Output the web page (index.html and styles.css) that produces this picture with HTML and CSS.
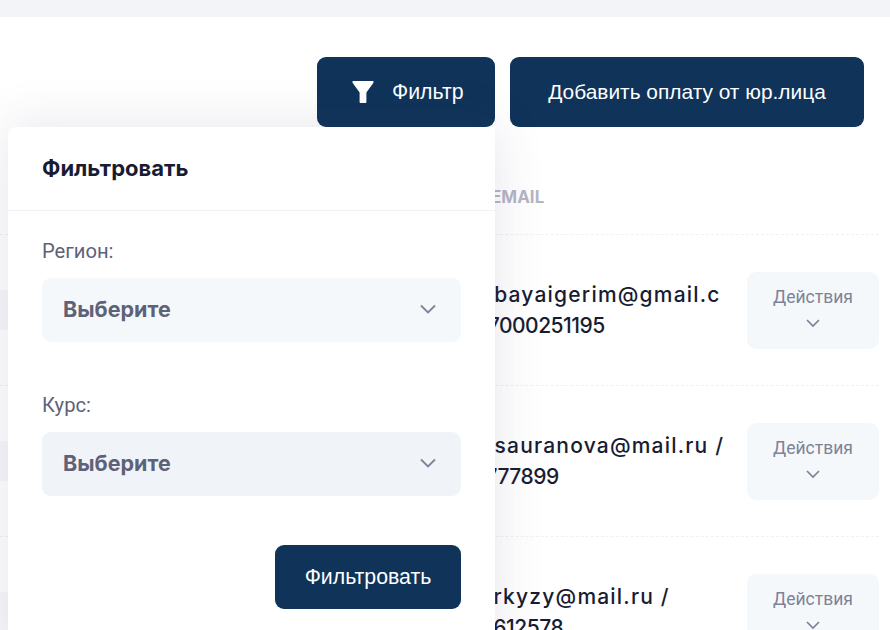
FILE: index.html
```html
<!DOCTYPE html>
<html lang="ru">
<head>
<meta charset="utf-8">
<title>Оплаты</title>
<link rel="stylesheet" href="styles.css">
</head>
<body>
<div class="topbar"></div>
<main class="card">
  <div class="toolbar">
    <div class="filter-wrap">
      <button class="btn btn-filter">
        <svg class="funnel" viewBox="0 0 22 24" width="22" height="24"><path d="M.6 1h20.8l.1 1.8-7.1 9.6v10.2l-.6.5H8.2l-.6-.5V12.4L.5 2.8z" fill="#fff"/></svg>
        <span>Фильтр</span>
      </button>
      <section class="popover">
        <h2 class="pop-title">Фильтровать</h2>
        <div class="pop-body">
          <label class="field-label">Регион:</label>
          <div class="select">
            <span>Выберите</span>
            <svg viewBox="0 0 18 12" width="18" height="12"><path d="M2 2.5l7 7 7-7" fill="none" stroke="#7e8299" stroke-width="1.8"/></svg>
          </div>
          <label class="field-label second">Курс:</label>
          <div class="select alt">
            <span>Выберите</span>
            <svg viewBox="0 0 18 12" width="18" height="12"><path d="M2 2.5l7 7 7-7" fill="none" stroke="#7e8299" stroke-width="1.8"/></svg>
          </div>
          <div class="pop-actions"><button class="btn btn-apply">Фильтровать</button></div>
        </div>
      </section>
    </div>
    <button class="btn btn-add">Добавить оплату от юр.лица</button>
  </div>

  <div class="table">
    <div class="thead"><span class="th">EMAIL</span></div>
    <div class="row">
      <div class="thumb"></div>
      <div class="email"><div class="addr">aina.bayaigerim@gmail.c</div><div class="phone">om / 7000251195</div></div>
      <div class="action"><span>Действия</span><svg viewBox="0 0 16 10" width="16" height="10"><path d="M2 2l6 6 6-6" fill="none" stroke="#7e8299" stroke-width="1.7"/></svg></div>
    </div>
    <div class="row">
      <div class="thumb"></div>
      <div class="email"><div class="addr">aida.sauranova@mail.ru /</div><div class="phone">8107777899</div></div>
      <div class="action"><span>Действия</span><svg viewBox="0 0 16 10" width="16" height="10"><path d="M2 2l6 6 6-6" fill="none" stroke="#7e8299" stroke-width="1.7"/></svg></div>
    </div>
    <div class="row">
      <div class="thumb"></div>
      <div class="email"><div class="addr">aildarkyzy@mail.ru /</div><div class="phone">87011612578</div></div>
      <div class="action"><span>Действия</span><svg viewBox="0 0 16 10" width="16" height="10"><path d="M2 2l6 6 6-6" fill="none" stroke="#7e8299" stroke-width="1.7"/></svg></div>
    </div>
  </div>
</main>
</body>
</html>
```
FILE: styles.css
```css
* { box-sizing: border-box; }
html, body { margin: 0; height: 630px; overflow: hidden; background: #fff; }
body { font-family: Inter, "Liberation Sans", sans-serif; }

.topbar { height: 17px; background: #f2f4f8; }
.card { background: #fff; height: 613px; overflow: hidden; }

.toolbar {
  display: flex;
  justify-content: flex-end;
  gap: 15px;
  padding: 40px 26px 0 0;
}
.filter-wrap { position: relative; }

.btn {
  border: 0;
  border-radius: 9px;
  background: #0f3359;
  color: #fff;
  font-family: "Liberation Sans", Arial, sans-serif;
  font-size: 21.3px;
}
.btn-filter {
  width: 178px;
  height: 70px;
  display: flex;
  align-items: center;
  padding-left: 35px;
  gap: 18px;
}
.btn-add { width: 354px; height: 70px; font-size: 20.9px; }

.popover {
  position: absolute;
  z-index: 2;
  top: 70px;
  right: 0;
  width: 487px;
  height: 520px;
  background: #fff;
  border-radius: 8px 0 0 0;
  box-shadow: 0 0 50px rgba(82, 63, 105, .15);
}
.pop-title {
  margin: 0;
  height: 84px;
  padding: 28px 34px 0;
  font-size: 22px;
  line-height: 26px;
  font-weight: 700;
  color: #181c32;
  border-bottom: 1px solid #eff2f5;
}
.pop-body { padding: 26px 34px 0; }
.field-label {
  display: block;
  font-family: Roboto, sans-serif;
  font-size: 20.2px;
  line-height: 28px;
  color: #5e6278;
  margin-bottom: 13px;
}
.field-label.second { margin-top: 49px; margin-bottom: 13px; }
.select {
  height: 64px;
  border-radius: 9px;
  background: #f5f8fa;
  padding: 0 24px 3px 21px;
  display: flex;
  align-items: center;
  justify-content: space-between;
  font-size: 21.5px;
  font-weight: 700;
  color: #5e6278;
}
.select.alt { background: #f0f3f8; }
.pop-actions { display: flex; justify-content: flex-end; margin-top: 49px; }
.btn-apply { width: 186px; height: 64px; }

.table { margin-right: 11px; }
.thead { height: 108px; padding: 59px 0 0 491px; border-bottom: 1px dashed #eff2f5; }
.th { font-size: 17px; font-weight: 700; color: #b5b5c3; line-height: 22px; display: block; }
.row {
  height: 151px;
  display: grid;
  grid-template-columns: 440px 1fr 132px;
  align-items: center;
  border-bottom: 1px dashed #eff2f5;
}
.thumb { width: 8px; height: 40px; background: #f8f8fb; }
.email { font-size: 21px; line-height: 31px; font-weight: 500; color: #181c32; white-space: nowrap; }
.addr { letter-spacing: 1.2px; }
.phone { letter-spacing: -.5px; }
.action {
  height: 77px;
  background: #f5f8fa;
  border-radius: 9px;
  display: flex;
  flex-direction: column;
  align-items: center;
  justify-content: center;
  gap: 11px;
  padding-bottom: 5px;
  font-family: Roboto, sans-serif;
  font-size: 17.5px;
  color: #7e8299;
}
```
